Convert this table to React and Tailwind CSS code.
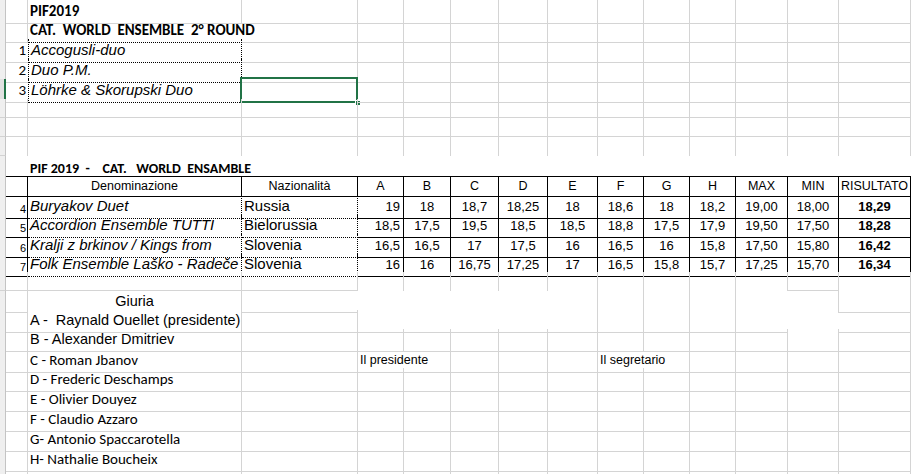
import React from "react";

// column widths follow the sheet's gridlines (x = 5, 27, 241, 357, 403 ...)
const COLS =
  "grid grid-cols-[6px_22px_214px_116px_46px_47px_48px_49px_50px_46px_46px_46px_52px_51px_72px_1px]";

const G = "border-r border-b border-r-[#d4d4d4] border-b-[#d4d4d4]";
const GR = "border-r border-r-[#d4d4d4]";
const GB = "border-b border-b-[#d4d4d4]";
const STRIP = "bg-[#efefef] border-r border-b border-r-[#c4c4c4] border-b-[#d2d2d2]";
const BOX = "border-r border-b border-black";
const DOT = "border-r border-b border-dotted border-black";

const calibri = "font-['Carlito','Lato','Noto_Sans',sans-serif]";
const arial = "font-['Liberation_Sans',Arial,sans-serif]";

function Row({ h, cells }) {
  return (
    <div className={COLS + " " + h}>
      {cells.map((c, i) => (
        <div key={i} className={"relative flex items-center whitespace-pre text-black " + (c.cls || "")}>
          {c.t}
        </div>
      ))}
    </div>
  );
}

// builds a row of 16 cells, default class for the sheet cells, strip on the left
function make(def, over = {}) {
  const out = [];
  for (let i = 0; i < 16; i++) {
    let cls = def;
    if (i === 0) cls = STRIP;
    if (i === 15) cls = "";
    out.push({ cls, t: null, ...(over[i] || {}) });
  }
  return out;
}

const ensembles = [
  { n: 4, name: "Buryakov Duet", naz: "Russia", v: ["19", "18", "18,7", "18,25", "18", "18,6", "18", "18,2", "19,00", "18,00", "18,29"] },
  { n: 5, name: "Accordion Ensemble TUTTI", naz: "Bielorussia", v: ["18,5", "17,5", "19,5", "18,5", "18,5", "18,8", "17,5", "17,9", "19,50", "17,50", "18,28"] },
  { n: 6, name: "Kralji z brkinov / Kings from", naz: "Slovenia", v: ["16,5", "16,5", "17", "17,5", "16", "16,5", "16", "15,8", "17,50", "15,80", "16,42"] },
  { n: 7, name: "Folk Ensemble Laško - Radeče", naz: "Slovenia", v: ["16", "16", "16,75", "17,25", "17", "16,5", "15,8", "15,7", "17,25", "15,70", "16,34"] },
];

const heads = ["A", "B", "C", "D", "E", "F", "G", "H", "MAX", "MIN", "RISULTATO"];

const jury = [
  { t: "B - Alexander Dmitriev", f: arial + " text-[14.5px] pl-[2px]" },
  { t: "C - Roman Jbanov", f: calibri + " text-[15px] pl-[2px]" },
  { t: "D - Frederic Deschamps", f: calibri + " text-[15px] pl-[2px]" },
  { t: "E - Olivier Douyez", f: calibri + " text-[15px] pl-[2px]" },
  { t: "F - Claudio Azzaro", f: calibri + " text-[15px] pl-[2px]" },
  { t: "G- Antonio Spaccarotella", f: calibri + " text-[15px] pl-[2px]" },
  { t: "H- Nathalie Boucheix", f: calibri + " text-[15px] pl-[2px]" },
];
const juryH = ["h-[20px]", "h-[19px]", "h-[20px]", "h-[20px]", "h-[20px]", "h-[20px]", "h-[20px]"];

const small = arial + " text-[12.5px]";

export default function App() {
  const num = calibri + " text-[15px] justify-end pr-[2px]";
  const ital = arial + " italic text-[15px] pl-[2px]";
  const selected = (
    <>
      <div className="absolute -left-[2px] -top-[2px] -right-[1px] -bottom-[1px] border-2 border-[#217346]" />
      <div className="absolute -right-[4px] -bottom-[4px] w-[6px] h-[6px] bg-[#217346] border border-white" />
    </>
  );

  return (
    <div className="w-[912px] h-[474px] overflow-hidden bg-white">
      {/* first sheet: list of the second round */}
      <Row h="h-[19px]" cells={make(G, { 2: { cls: G + " " + calibri + " font-bold text-[15px] pl-[2px]", t: "PIF2019" } })} />
      <Row
        h="h-[20px]"
        cells={make(G, {
          2: { cls: "border-b border-dotted border-black " + calibri + " font-bold text-[15px] pl-[2px]", t: "CAT.  WORLD  ENSEMBLE  2° ROUND" },
        })}
      />
      <Row h="h-[20px]" cells={make(G, { 1: { cls: GB + " " + num, t: "1" }, 2: { cls: "border-l " + DOT + " " + ital, t: "Accogusli-duo" } })} />
      <Row h="h-[20px]" cells={make(G, { 1: { cls: GB + " " + num, t: "2" }, 2: { cls: "border-l " + DOT + " " + ital, t: "Duo P.M." } })} />
      <Row
        h="h-[20px]"
        cells={make(G, {
          0: { cls: "bg-[#e1e1e1] border-r-2 border-b border-r-[#217346] border-b-[#d2d2d2]" },
          1: { cls: GB + " " + num, t: "3" },
          2: { cls: "border-l " + DOT + " " + ital, t: "Löhrke & Skorupski Duo" },
          3: { cls: G, t: selected },
        })}
      />
      <Row h="h-[19px]" cells={make(G)} />
      <Row h="h-[19px]" cells={make(G)} />
      <Row h="h-[19px]" cells={make(GR)} />

      {/* second sheet: results table */}
      <Row
        h="h-[20px]"
        cells={make("", { 2: { cls: calibri + " font-bold text-[14px] pl-[2px] pt-[2px]", t: "PIF 2019  -    CAT.   WORLD  ENSAMBLE" } })}
      />
      <Row
        h="h-[19px]"
        cells={make("", {
          1: { cls: "border-t " + BOX },
          2: { cls: "border-t " + BOX + " justify-center " + small, t: "Denominazione" },
          3: { cls: "border-t " + BOX + " justify-center " + small, t: "Nazionalità" },
          ...Object.fromEntries(heads.map((h, i) => [i + 4, { cls: "border-t " + BOX + " justify-center " + small, t: h }])),
        })}
      />
      {ensembles.map((e, k) => (
        <Row
          key={e.n}
          h={k === 1 ? "h-[20px]" : "h-[19px]"}
          cells={make("", {
            1: { cls: BOX + " " + arial + " text-[11px] justify-end items-end pr-[1px] text-[#4a3420]", t: String(e.n) },
            2: { cls: DOT + " " + arial + " italic text-[15px] pl-[2px]", t: e.name },
            3: { cls: DOT + " " + arial + " text-[15px] pl-[2px]", t: e.naz },
            ...Object.fromEntries(
              e.v.map((v, i) => [
                i + 4,
                {
                  cls:
                    BOX +
                    " " +
                    arial +
                    " text-[13px] " +
                    (i === 0 ? "justify-end pr-[3px]" : "justify-center") +
                    (i === 10 ? " font-bold" : ""),
                  t: v,
                },
              ])
            ),
          })}
        />
      ))}

      {/* jury */}
      <Row h="h-[19px]" cells={make(GR, { 1: { cls: G }, 2: { cls: G }, 3: { cls: G }, 13: { cls: G } })} />
      <Row
        h="h-[19px]"
        cells={make("", {
          1: { cls: G },
          2: { cls: GR + " justify-center " + arial + " text-[14.5px]", t: "Giuria" },
          3: { cls: GB },
          8: { cls: GR },
          9: { cls: GR },
          10: { cls: GR },
          11: { cls: GR },
          13: { cls: GR },
          14: { cls: G },
        })}
      />
      <Row
        h="h-[19px]"
        cells={make(GB, {
          1: { cls: G },
          2: { cls: G + " " + arial + " text-[14.5px] pl-[2px]", t: "A -  Raynald Ouellet (presidente)" },
          3: { cls: G },
          8: { cls: G },
          9: { cls: G },
          10: { cls: G },
          11: { cls: G },
          13: { cls: "" },
          14: { cls: G },
        })}
      />
      {jury.map((j, k) => (
        <Row
          key={j.t}
          h={juryH[k]}
          cells={make(
            G,
            k === 1
              ? {
                  2: { cls: G + " " + j.f, t: j.t },
                  4: { cls: GB + " " + small + " pl-[2px]", t: "Il presidente" },
                  9: { cls: GB + " " + small + " pl-[2px]", t: "Il segretario" },
                }
              : { 2: { cls: G + " " + j.f, t: j.t } }
          )}
        />
      ))}
      <Row h="h-[7px]" cells={make(GR)} />
    </div>
  );
}
